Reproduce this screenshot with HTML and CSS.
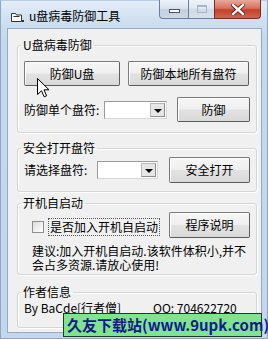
FILE: index.html
```html
<!DOCTYPE html>
<html>
<head>
<meta charset="utf-8">
<link rel="stylesheet" href="styles.css">
</head>
<body>
<div class="window">
  <div class="titlebar">
    <svg class="app-icon" width="14" height="12" viewBox="0 0 14 12">
      <path d="M1.5 2.5 L5.5 2.5 L6.5 4 L11.5 4 L11.5 10.5 L1.5 10.5 Z" fill="#fff" stroke="#333" stroke-width="1"/>
      <path d="M3.5 5.5 L9.5 5.5" stroke="#333" stroke-width="1"/>
      <rect x="12" y="9" width="2" height="2" fill="#333"/>
    </svg>
    <span class="title">u盘病毒防御工具</span>
    <div class="caption">
      <div class="cbtn cmin"><span class="dash"></span></div>
      <div class="cbtn cmax"><span class="box"></span></div>
      <div class="cbtn cclose">
        <svg width="14" height="11" viewBox="0 0 14 11">
          <path d="M2 1 L12 10 M12 1 L2 10" stroke="#5a1a10" stroke-width="4" stroke-linecap="square"/>
          <path d="M2 1 L12 10 M12 1 L2 10" stroke="#fff" stroke-width="2.4" stroke-linecap="square"/>
        </svg>
      </div>
    </div>
  </div>
  <div class="client">
    <fieldset class="group g1">
      <legend>U盘病毒防御</legend>
      <div class="row row1">
        <button class="btn w96">防御U盘</button>
        <button class="btn w121">防御本地所有盘符</button>
      </div>
      <div class="row row2">
        <span class="lbl w80">防御单个盘符:</span>
        <div class="combo w63"><span class="combo-field"></span><span class="combo-arrow"></span></div>
        <button class="btn w73 push">防御</button>
      </div>
    </fieldset>
    <fieldset class="group g2">
      <legend>安全打开盘符</legend>
      <div class="row">
        <span class="lbl w73">请选择盘符:</span>
        <div class="combo w61"><span class="combo-field"></span><span class="combo-arrow"></span></div>
        <button class="btn w81 h26 push">安全打开</button>
      </div>
    </fieldset>
    <fieldset class="group g3">
      <legend>开机自启动</legend>
      <div class="row">
        <div class="check">
          <span class="checkbox"></span>
          <span class="check-label">是否加入开机自启动</span>
        </div>
        <button class="btn w81 h26 push">程序说明</button>
      </div>
      <div class="note">
        <span class="note-line">建议:加入开机自启动.该软件体积小,并不</span>
        <span class="note-line">会占多资源.请放心使用!</span>
      </div>
    </fieldset>
    <fieldset class="group g4">
      <legend>作者信息</legend>
      <div class="row info">
        <span class="author">By BaCde[行者僧]</span>
        <span>QQ: 704622720</span>
      </div>
    </fieldset>
  </div>
  <svg class="cursor" width="13" height="20" viewBox="0 0 13 20">
    <path d="M0.5 0.5 L0.5 16.5 L4.5 12.8 L7.2 18.8 L9.6 17.8 L7 11.8 L12 11.8 Z" fill="#fff" stroke="#000" stroke-width="1" stroke-linejoin="miter"/>
  </svg>
  <div class="watermark">久友下载站(www.9upk.com)</div>
</div>
</body>
</html>
```
FILE: styles.css
```css
* { box-sizing: border-box; }
html, body { margin: 0; padding: 0; }
body {
  width: 268px;
  height: 339px;
  overflow: hidden;
  font-family: "Noto Sans CJK SC", "Liberation Sans", sans-serif;
  font-size: 12px;
  color: #000;
}
.window {
  position: relative;
  width: 268px;
  height: 339px;
  border: 1px solid #8ea6c2;
  border-top-color: #b9cbe0;
  background: linear-gradient(#e3edf8 0, #cfdff1 20px, #c5d8ee 40px, #c3d6ed 100%);
}
.titlebar {
  height: 27px;
  display: flex;
  align-items: flex-start;
}
.app-icon { margin: 10px 0 0 9px; }
.title {
  margin: 7px 0 0 5px;
  line-height: 15px;
  font-size: 12px;
}
.caption {
  display: flex;
  margin-left: auto;
  margin-right: 6px;
  margin-top: -1px;
}
.cbtn {
  height: 19px;
  border: 1px solid #6b7f99;
  border-top: none;
  display: flex;
  align-items: center;
  justify-content: center;
}
.cmin {
  width: 29px;
  border-radius: 0 0 0 4px;
  border-right: none;
  background: linear-gradient(#eef3f9 0, #dbe4ef 45%, #c2cfdf 55%, #cdd9e8 100%);
}
.cmin .dash {
  width: 11px;
  height: 4px;
  margin-top: 3px;
  background: #fff;
  border: 1px solid #44546a;
}
.cmax {
  width: 26px;
  border-right: none;
  background: linear-gradient(#eef3f9 0, #e0e8f2 45%, #cfdae7 55%, #d8e2ee 100%);
}
.cmax .box {
  width: 10px;
  height: 8px;
  border: 1px solid #aab6c6;
  border-top-width: 2px;
}
.cclose {
  width: 47px;
  border-radius: 0 0 4px 0;
  border-color: #7a2c20;
  background: linear-gradient(#e9a899 0, #d77360 45%, #c2412a 55%, #d3654a 100%);
}
.client {
  margin-left: 6px;
  width: 255px;
  height: 305px;
  border: 1px solid #98aac0;
  background: #f0f0f0;
  padding: 0;
  overflow: hidden;
}
.group {
  margin: 0 0 0 9px;
  width: 240px;
  border: 1px solid #d5d5d5;
  border-radius: 3px;
  box-shadow: inset 1px 1px 0 #fff, 1px 1px 0 #fff;
  padding: 0 6px;
  min-width: 0;
}
.group legend {
  padding: 0 2px;
  margin-left: -3px;
  line-height: 14px;
  height: 14px;
  font-size: 12px;
}
.g1 { margin-top: 9px; padding-top: 9px; padding-bottom: 10px; }
.g2 { margin-top: 8px; padding-top: 2px; padding-bottom: 8px; }
.g3 { margin-top: 4px; padding-top: 2px; padding-bottom: 2px; }
.g4 { margin-top: 10px; padding-top: 2px; padding-bottom: 12px; }

.row { display: flex; align-items: center; }
.row1 { gap: 8px; }
.row2 { margin-top: 11px; }
.push { margin-left: auto; }

.btn {
  font-family: inherit;
  font-size: 12px;
  color: #000;
  height: 25px;
  padding: 0;
  border: 1px solid #7a7a7a;
  border-right-color: #5f5f5f;
  border-bottom-color: #5a5a5a;
  border-radius: 2px;
  background: linear-gradient(#f6f6f6 0, #efefef 48%, #e2e2e2 52%, #d9d9d9 100%);
  box-shadow: inset 1px 1px 0 #fff;
  line-height: 22px;
}
.h26 { height: 26px; }
.w96 { width: 96px; }
.w121 { width: 121px; }
.w73 { width: 73px; }
.w81 { width: 81px; }
.w80 { width: 80px; }
.w63 { width: 63px; }
.w61 { width: 61px; }

.lbl { line-height: 14px; white-space: nowrap; }

.combo {
  height: 18px;
  display: flex;
  border: 1px solid #9a9a9a;
  border-right-color: #d8d8d8;
  border-bottom-color: #d8d8d8;
  background: #fff;
  padding: 1px;
}
.combo-field { flex: 1; }
.combo-arrow {
  width: 15px;
  background: #e6e6e6;
  border: 1px solid #b8b8b8;
  border-right-color: #8c8c8c;
  border-bottom-color: #8c8c8c;
  position: relative;
}
.combo-arrow::after {
  content: "";
  position: absolute;
  left: 3px;
  top: 5px;
  border-left: 4px solid transparent;
  border-right: 4px solid transparent;
  border-top: 4px solid #000;
}

.check {
  display: flex;
  align-items: center;
  margin-left: 8px;
  align-self: flex-end;
  margin-bottom: 2px;
}
.checkbox {
  width: 12px;
  height: 12px;
  border: 1px solid #8e8f8f;
  background: linear-gradient(135deg, #dcdcdc, #fff);
  margin-right: 4px;
}
.check-label {
  line-height: 16px;
  padding: 0 1px;
  border: 1px dotted #555;
}
.note {
  margin: 6px 0 0 8px;
  font-size: 12px;
  white-space: nowrap;
}
.note-line {
  display: block;
  line-height: 14px;
  height: 14px;
}
.info { line-height: 14px; }
.author { width: 129px; }

.cursor {
  position: absolute;
  left: 36px;
  top: 77px;
}
.watermark {
  position: absolute;
  left: 62px;
  top: 312px;
  width: 199px;
  height: 24px;
  background: #7fe58c;
  border: 1px solid #1d3b1d;
  color: #141a8a;
  font-weight: bold;
  font-size: 15px;
  line-height: 22px;
  padding-left: 3px;
  white-space: nowrap;
  font-family: "Noto Sans CJK SC", "Liberation Sans", sans-serif;
}
```
